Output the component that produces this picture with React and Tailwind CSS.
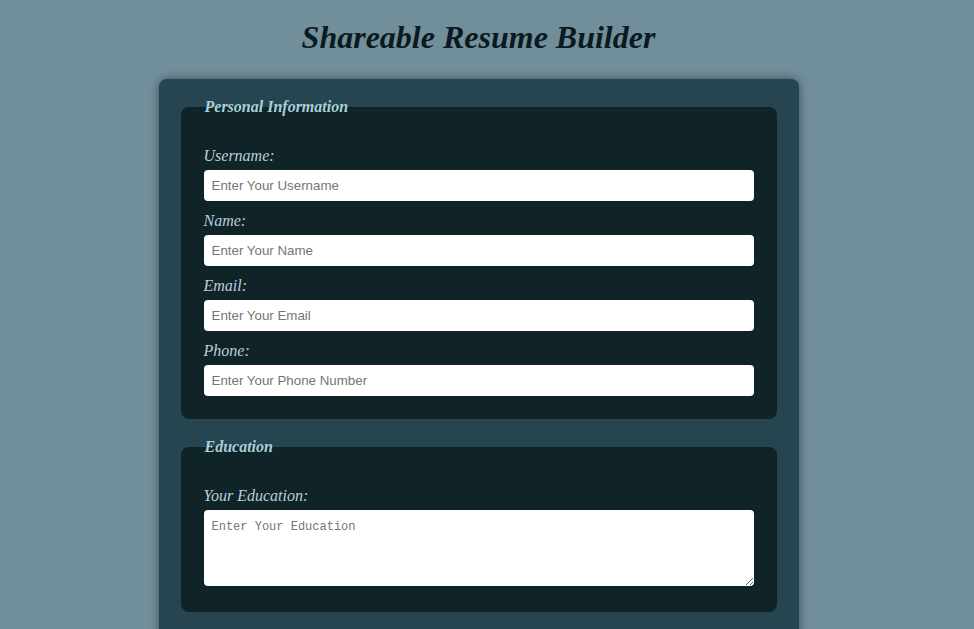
import React from "react";

const Field = ({ id, label, placeholder, type = "text" }) => (
  <>
    <label htmlFor={id} className="block mb-[5px] text-[16px] leading-[18px] italic text-[#b9cfdc]">
      {label}
    </label>
    <input
      id={id}
      type={type}
      placeholder={placeholder}
      className="block w-full h-[31px] mb-[11px] px-2 rounded-[4px] bg-white text-[13.33px] text-black placeholder:text-[#757575] outline-none"
      style={{ fontFamily: "Arial, 'Liberation Sans', sans-serif" }}
    />
  </>
);

const Area = ({ id, label, placeholder }) => (
  <>
    <label htmlFor={id} className="block mb-[5px] text-[16px] leading-[18px] italic text-[#b9cfdc]">
      {label}
    </label>
    <textarea
      id={id}
      placeholder={placeholder}
      className="block w-full h-[76px] mb-[14px] px-2 py-[8px] rounded-[4px] bg-white text-[12px] text-black placeholder:text-[#757575] outline-none"
      style={{ fontFamily: "'Liberation Mono', monospace" }}
    />
  </>
);

const Section = ({ title, children }) => (
  <fieldset className="mb-[19px] border-0 rounded-lg bg-[#102326] px-[23px] pt-[31px] pb-[12px]">
    <legend className="px-0 ml-[1px] text-[16px] leading-[18px] font-bold italic text-[#a9d0da]">{title}</legend>
    {children}
  </fieldset>
);

export default function App() {
  return (
    <div className="min-h-screen bg-[#718e9b]" style={{ fontFamily: "'Liberation Serif', 'Times New Roman', serif" }}>
      {/* page width leaves room for the scrollbar, like the original */}
      <div className="pr-[17px] pb-10">
        <h1 className="pt-[19px] mb-[23px] text-center text-[32px] leading-[37px] font-bold italic text-[#0b1a20]">
          Shareable Resume Builder
        </h1>

        <div className="w-[640px] mx-auto rounded-lg bg-[#264550] p-[22px] pt-[19px] shadow-[0_0_10px_rgba(0,0,0,0.45)]">
          <form>
            <Section title="Personal Information">
              <Field id="username" label="Username:" placeholder="Enter Your Username" />
              <Field id="name" label="Name:" placeholder="Enter Your Name" />
              <Field id="email" label="Email:" placeholder="Enter Your Email" type="email" />
              <Field id="phone" label="Phone:" placeholder="Enter Your Phone Number" type="tel" />
            </Section>

            <Section title="Education">
              <Area id="education" label="Your Education:" placeholder="Enter Your Education" />
            </Section>

            <Section title="Skills">
              <Area id="skills" label="Your Skills:" placeholder="Enter Your Skills" />
            </Section>

            <Section title="Work Experience">
              <Area id="experience" label="Your Experience:" placeholder="Enter Your Work Experience" />
            </Section>

            <button type="submit" className="w-full h-[38px] rounded-[4px] bg-[#102326] text-[#a9d0da] font-bold italic">
              Generate Resume
            </button>
          </form>
        </div>
      </div>
    </div>
  );
}
